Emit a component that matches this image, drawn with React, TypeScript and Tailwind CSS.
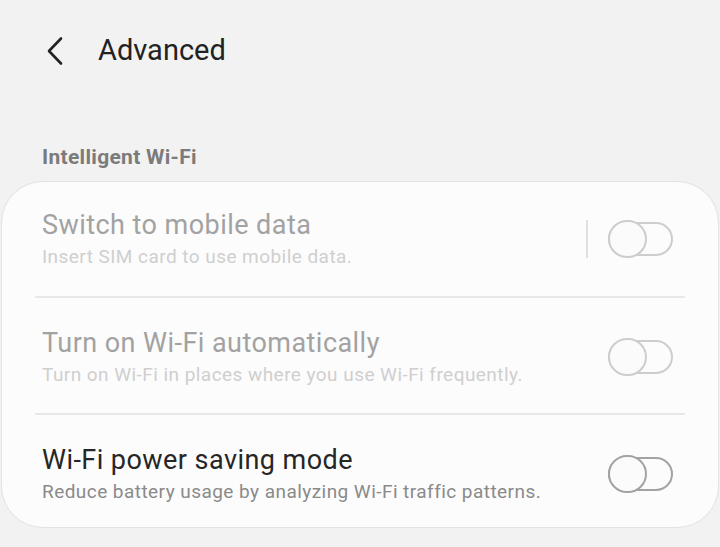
import React from 'react';

const rows = [
  {
    title: 'Switch to mobile data',
    sub: 'Insert SIM card to use mobile data.',
    disabled: true,
    bar: true,
  },
  {
    title: 'Turn on Wi-Fi automatically',
    sub: 'Turn on Wi-Fi in places where you use Wi-Fi frequently.',
    disabled: true,
    bar: false,
  },
  {
    title: 'Wi-Fi power saving mode',
    sub: 'Reduce battery usage by analyzing Wi-Fi traffic patterns.',
    disabled: false,
    bar: false,
  },
];

const Toggle = ({ disabled }: { disabled: boolean }) => (
  <div className="relative w-[65px] h-[38px] flex items-center">
    <div
      className={
        disabled
          ? 'w-[65px] h-[34px] rounded-full border-2 border-[#cdcdcd]'
          : 'w-[65px] h-[34px] rounded-full border-2 border-[#a3a3a3]'
      }
    />
    <div
      className={
        disabled
          ? 'absolute left-0 top-0 w-[39px] h-[38px] rounded-full border-2 border-[#cdcdcd] bg-[#fbfbfb]'
          : 'absolute left-0 top-0 w-[39px] h-[38px] rounded-full border-2 border-[#a3a3a3] bg-[#fbfbfb]'
      }
    />
  </div>
);

const App = () => {
  return (
    <div className="w-[720px] h-[547px] bg-[#f2f2f2] overflow-hidden" style={{ fontFamily: 'Roboto, "Noto Sans", sans-serif' }}>
      {/* header */}
      <div className="flex items-center h-[102px] pb-[1px]">
        <svg width="20" height="30" viewBox="0 0 20 30" className="ml-[45px]">
          <path d="M16 2.5 L4 15 L16 27.5" fill="none" stroke="#222" strokeWidth="2.6" strokeLinecap="round" strokeLinejoin="round" />
        </svg>
        <h1 className="ml-[33px] text-[29px] text-[#222] leading-none">Advanced</h1>
      </div>

      <div className="pl-[42px] pt-[43px] text-[21px] tracking-[0.3px] font-bold text-[#7b7b7b] leading-[24px]">Intelligent Wi-Fi</div>

      <div className="mt-[12px] mx-[1px] h-[347px] bg-[#fcfcfc] border border-[#e2e2e2] rounded-[42px] px-[33px]">
        {rows.map((row, i) => (
          <div
            key={i}
            className={
              i === 0
                ? 'h-[116px] flex items-center pl-[7px] pr-[12px] border-b-2 border-[#e8e8e8] pb-[4px]'
                : i === 1
                ? 'h-[117px] flex items-center pl-[7px] pr-[12px] border-b-2 border-[#e8e8e8]'
                : 'h-[111px] flex items-center pl-[7px] pr-[12px] pt-[4px]'
            }
          >
            <div className="flex-1 pt-[2px]">
              <div className={row.disabled ? 'text-[27px] tracking-[0.45px] leading-[32px] text-[#a2a2a2]' : 'text-[27px] tracking-[0.45px] leading-[32px] text-[#262626]'}>
                {row.title}
              </div>
              <div className={row.disabled ? 'mt-[5px] text-[19px] tracking-[0.45px] leading-[22px] text-[#cfcfcf]' : 'mt-[5px] text-[19px] tracking-[0.45px] leading-[22px] text-[#8a8a8a]'}>
                {row.sub}
              </div>
            </div>
            {row.bar && <div className="w-[2px] h-[38px] bg-[#e0e0e0] mr-[20px] mt-[4px]" />}
            <div className={row.bar ? 'mt-[4px]' : 'mt-[2px]'}>
              <Toggle disabled={row.disabled} />
            </div>
          </div>
        ))}
      </div>
    </div>
  );
};

export default App;
